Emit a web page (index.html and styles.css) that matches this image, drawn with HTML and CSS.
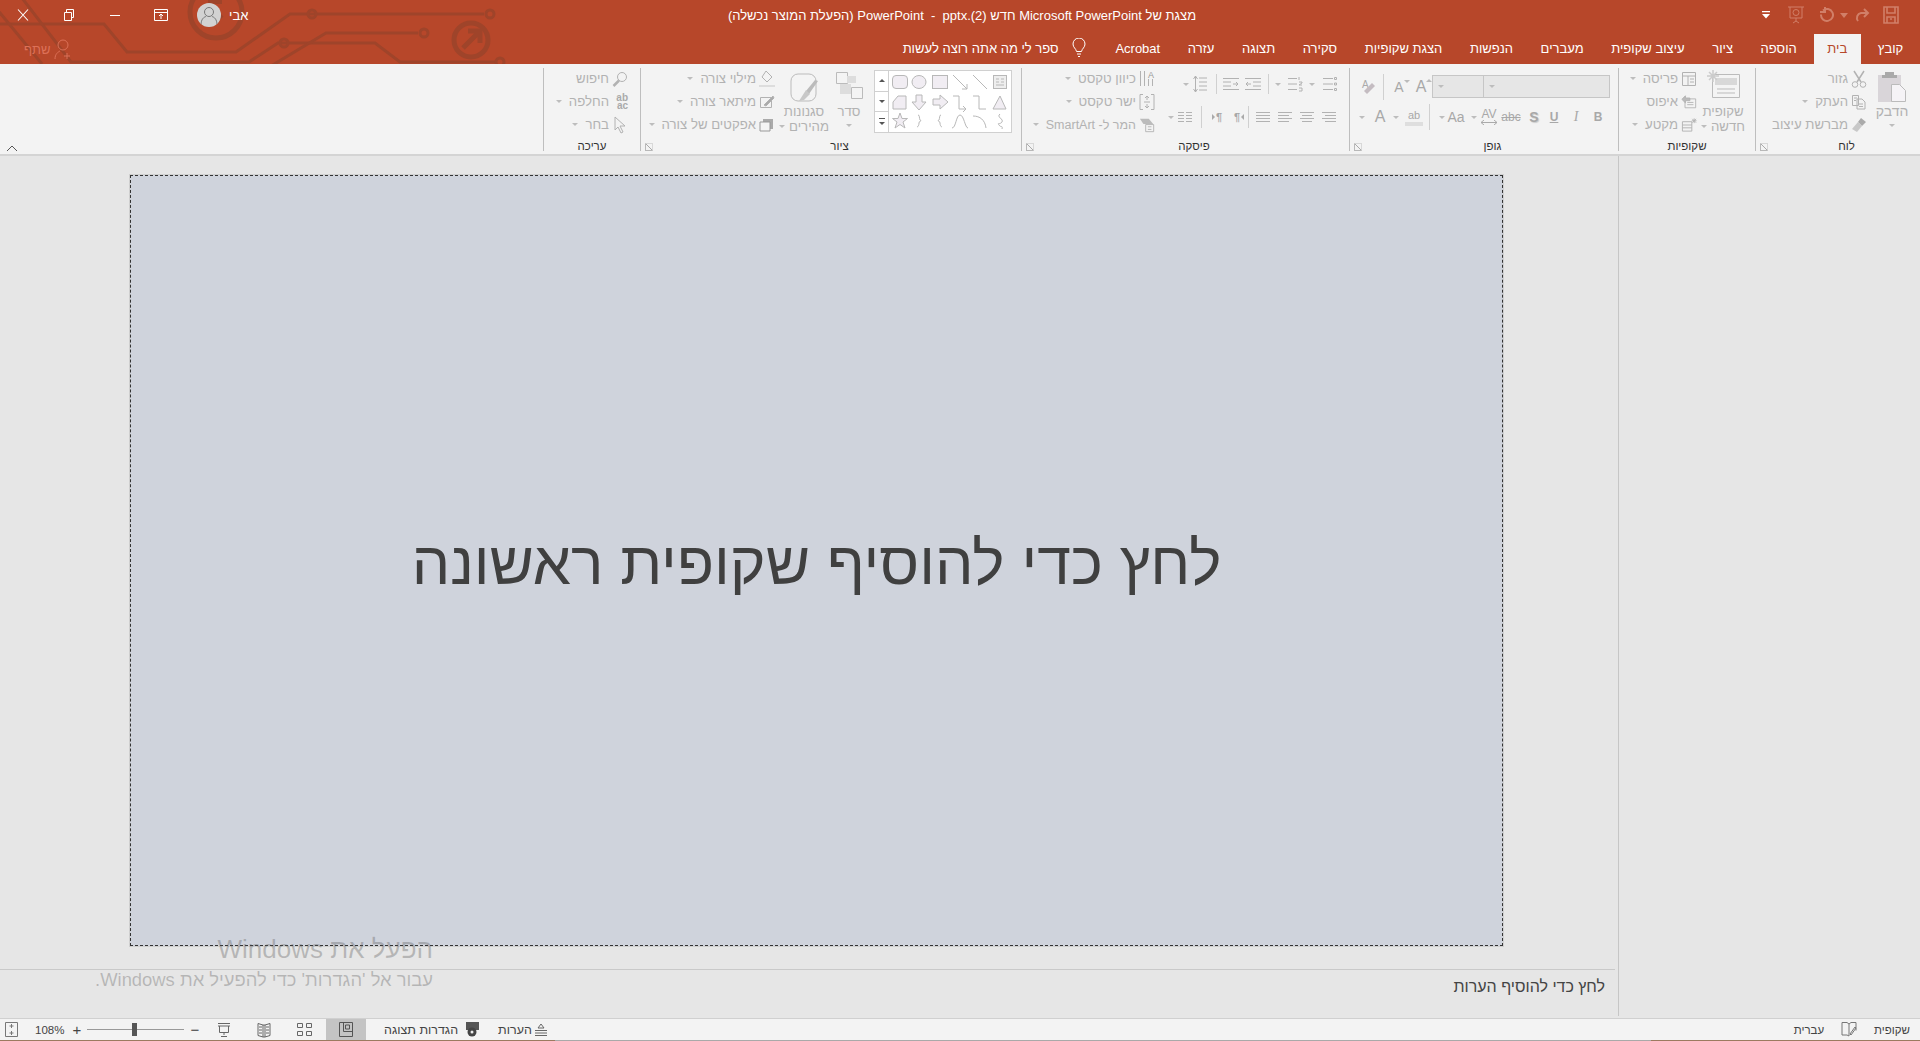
FILE: index.html
```html
<!DOCTYPE html>
<html lang="he">
<head>
  <meta charset="UTF-8">
  <title>PowerPoint</title>
  <link rel="stylesheet" href="styles.css">
</head>
<body>
  <header class="header">
    <svg class="circuit" width="520" height="64" viewBox="0 0 520 64" fill="none" stroke="#9f442a" stroke-width="3">
      <path d="M0 24H104L127 52H236L290 14H484"/>
      <path d="M22 -2L71 62H249L278 43H375L400 62H495"/>
      <path d="M-4 8L42 64"/>
      <path d="M271 66L326 33H418"/>
      <circle cx="312" cy="14" r="4"/><circle cx="490" cy="14" r="4"/>
      <circle cx="284" cy="43" r="4"/><circle cx="500" cy="62" r="4"/><circle cx="424" cy="33" r="4"/>
      <circle cx="471" cy="40" r="17" stroke-width="5"/>
      <path d="M463 48L479 32M468 31H480V43" stroke-width="5"/>
      <circle cx="216" cy="12" r="26" stroke-width="5"/>
      <path d="M208 4L222 18M208 2H222" stroke-width="4"/>
    </svg>

    <div class="titlebar">
      <div class="win-controls">
        <svg class="win-btn" width="16" height="16" viewBox="0 0 16 16" stroke="#fff" fill="none" stroke-width="1.1"><path d="M3 2.500L13 13.500M13 2.500L3 13.500"/></svg>
        <svg class="win-btn" width="16" height="16" viewBox="0 0 16 16" stroke="#fff" fill="none"><path d="M3.500 5.500h7v8h-7zM5.500 5.500v-3h7v8h-2"/></svg>
        <svg class="win-btn" width="16" height="16" viewBox="0 0 16 16" stroke="#fff" fill="none"><path d="M3 8.500h10"/></svg>
        <svg class="win-btn" width="16" height="16" viewBox="0 0 16 16" stroke="#fff" fill="none"><path d="M1.500 2.500h13v11h-13zM1.500 5.500h13M8 12V7.500M6 9l2-2 2 2"/></svg>
        <div class="avatar">
          <svg width="24" height="24" viewBox="0 0 24 24" fill="none" stroke="#777"><circle cx="12" cy="9" r="4.500"/><path d="M4 22c0-6 3-8 5-8.500M20 22c0-6-3-8-5-8.500"/></svg>
        </div>
        <span class="user-name">אבי</span>
      </div>
      <div class="doc-title">מצגת של Microsoft PowerPoint חדש (2).pptx&rlm; &nbsp;-&nbsp; &rlm;PowerPoint (הפעלת המוצר נכשלה)</div>
      <div class="qat">
        <svg width="14" height="10" viewBox="0 0 14 10" fill="#fff"><path d="M3 1h8v1.300H3zM3 4h8L7 8.500z"/></svg>
        <svg class="qat-present" width="18" height="20" viewBox="0 0 18 20" fill="none" stroke="#d17f68"><path d="M1 2h16M3 2v11h12V2M9 13v3M6 18l3-2 3 2"/><circle cx="9" cy="7.500" r="3"/></svg>
        <svg class="qat-undo" width="16" height="18" viewBox="0 0 16 18" fill="none" stroke="#d17f68" stroke-width="2"><path d="M5 4.500a6 6 0 1 1-2 4M7 1v5H2"/></svg>
        <svg width="8" height="5" viewBox="0 0 8 5" fill="#d17f68"><path d="M0 0h8L4 5z"/></svg>
        <svg class="qat-redo" width="16" height="16" viewBox="0 0 16 16" fill="none" stroke="#d17f68" stroke-width="2"><path d="M14 6H7a5 5 0 0 0-3 8M10 2l4 4-4 4"/></svg>
        <svg class="qat-save" width="16" height="18" viewBox="0 0 16 18" fill="none" stroke="#d17f68" stroke-width="1.600"><path d="M1 1h14v16H1zM4 1v6h8V1M4 17v-6h8v6M7 13h2"/></svg>
      </div>
    </div>

    <div class="tabrow">
      <nav class="tabs">
        <span class="tab">קובץ</span>
        <span class="tab active">בית</span>
        <span class="tab">הוספה</span>
        <span class="tab">ציור</span>
        <span class="tab">עיצוב שקופית</span>
        <span class="tab">מעברים</span>
        <span class="tab">הנפשות</span>
        <span class="tab">הצגת שקופיות</span>
        <span class="tab">סקירה</span>
        <span class="tab">תצוגה</span>
        <span class="tab">עזרה</span>
        <span class="tab">Acrobat</span>
        <span class="tell-me">
          <svg width="14" height="20" viewBox="0 0 14 20" fill="none" stroke="#fff"><path d="M4.500 13.500C4 10.500 1 9.500 1 6a6 6 0 0 1 12 0c0 3.500-3 4.500-3.500 7.500zM5 16h4M6 18.500h2"/></svg>
          ספר לי מה אתה רוצה לעשות
        </span>
      </nav>
      <div class="share">
        <svg width="20" height="22" viewBox="0 0 20 22" fill="none" stroke="#dd7158"><circle cx="9" cy="7" r="5"/><path d="M1 21c0-5 3-7 5-8M13 15v6M10 18h6"/></svg>
        <span>שתף</span>
      </div>
    </div>
  </header>

  <section class="ribbon">
    <div class="group g-clip">
      <div class="group-body">
        <div class="big-tool paste">
          <svg width="28" height="30" viewBox="0 0 28 30"><path d="M0 3h23v27H0z" fill="#d9d5d9"/><path d="M7 0h9v3h3v3H4V3h3z" fill="#aaa"/><path d="M13.500 12.500h8l6 6v11h-14z" fill="#f5f3f6" stroke="#bbb"/></svg>
          <span>הדבק</span>
          <i class="caret"></i>
        </div>
        <div class="tool-col">
          <div class="tool"><svg class="ic" width="16" height="18" viewBox="0 0 16 18"><path d="M3 1l7 11M13 1L6 12" stroke-width="1.500"/><circle cx="4" cy="14.500" r="2.800"/><circle cx="12" cy="14.500" r="2.800"/></svg><span>גזור</span></div>
          <div class="tool"><svg class="ic" width="16" height="16" viewBox="0 0 16 16"><path d="M1.500 1.500h6v10h-6zM6 5h5l3 3v7H6zM3 4h3M3 6.500h2M8 10h4M8 12.500h4"/></svg><span>העתק</span><i class="caret far"></i></div>
          <div class="tool"><svg width="16" height="16" viewBox="0 0 16 16"><path d="M10 1l5 4-4 4-4-4z" fill="#aaa"/><path d="M7 5l4 4-5 6-5-3z" fill="#c8c8c8"/></svg><span>מברשת עיצוב</span></div>
        </div>
      </div>
      <div class="group-label">לוח</div>
      <i class="launcher"></i>
    </div>

    <div class="group g-slides">
      <div class="group-body">
        <div class="big-tool new-slide">
          <svg width="34" height="28" viewBox="0 0 34 28" fill="none"><path d="M6.500 4.500h27v23h-27z" fill="#f4f4f4" stroke="#bbb"/><path d="M9 8h22v7H9z" fill="#d8d8d8"/><path d="M11 19h18M11 23h18" stroke="#bbb"/><path d="M7 0v12M1 6h12M3 2l8 8M11 2l-8 8" stroke="#ccc" stroke-width="1.500"/></svg>
          <span>שקופית</span>
          <span class="with-caret">חדשה <i class="caret"></i></span>
        </div>
        <div class="tool-col">
          <div class="tool"><svg class="ic" width="16" height="16" viewBox="0 0 16 16"><path d="M1.500 1.500h13v13h-13zM1.500 5h13M7 5v9.500M9 8h4M9 11h4"/></svg><span>פריסה</span><i class="caret"></i></div>
          <div class="tool"><svg class="ic" width="16" height="16" viewBox="0 0 18 16"><path d="M4.500 4.500h12v10h-12zM7 11h7M7 8.500h7"/><path d="M1 5l4-4v2.500h5v3H5V9z" fill="#bbb"/></svg><span>איפוס</span></div>
          <div class="tool"><svg class="ic" width="16" height="16" viewBox="0 0 17 16"><path d="M1.500 4.500h10v10h-10zM1.500 8h10M1.500 11h10"/><path d="M14 1v5M11.500 3.500h5M12 1.500l4 4M16 1.500l-4 4"/></svg><span>מקטע</span><i class="caret"></i></div>
        </div>
      </div>
      <div class="group-label">שקופיות</div>
    </div>

    <div class="group g-font">
      <div class="group-body stacked">
        <div class="icon-row font-row1">
          <div class="combo combo-name"><i class="caret"></i></div>
          <div class="combo combo-size"><i class="caret"></i></div>
          <span class="glyph g-large">A<i></i></span>
          <span class="glyph g-small">A<i></i></span>
          <i class="vsep"></i>
          <svg class="eraser" width="16" height="18" viewBox="0 0 16 18"><text x="1" y="10" font-size="10" fill="#aaa" font-family="Liberation Sans">A</text><path d="M6 16l8-8-3-3-8 8z" fill="#c4bcc1"/></svg>
        </div>
        <div class="icon-row font-row2">
          <span class="glyph bold">B</span>
          <span class="glyph ital">I</span>
          <span class="glyph under">U</span>
          <span class="glyph shadow">S</span>
          <span class="glyph strike">abc</span>
          <span class="glyph av">AV<svg width="16" height="5" viewBox="0 0 16 5" fill="none" stroke="#aaa"><path d="M0 2.500h16M3 0L0 2.500 3 5M13 0l3 2.500L13 5"/></svg></span>
          <i class="caret c-av"></i>
          <span class="glyph aa">Aa</span>
          <i class="caret c-aa"></i>
          <i class="vsep"></i>
          <span class="glyph hilite">ab</span>
          <i class="caret c-hl"></i>
          <span class="glyph big-a">A</span>
          <i class="caret c-a"></i>
        </div>
      </div>
      <div class="group-label">גופן</div>
      <i class="launcher"></i>
    </div>

    <div class="group g-para">
      <div class="group-body">
        <div class="para-icons">
          <div class="icon-row para-row1">
            <svg class="ic" width="16" height="16" viewBox="0 0 16 16"><path d="M2 2.500h10M2 8h10M2 13.500h10M13.500 1.500h2v2h-2zM13.500 7h2v2h-2zM13.500 12.500h2v2h-2z"/></svg>
            <i class="caret"></i>
            <svg class="ic" width="16" height="16" viewBox="0 0 16 16"><path d="M1 2.500h9M1 8h9M1 13.500h9M12 1v3M12 6h3v1l-3 2h3M12 12h3v3h-3"/></svg>
            <i class="caret"></i>
            <i class="vsep"></i>
            <svg class="ic" width="16" height="14" viewBox="0 0 16 14"><path d="M0 1.500h16M0 12.500h16M8 5h8M8 9h8M6 7H1M3 5L1 7l2 2"/></svg>
            <svg class="ic" width="16" height="14" viewBox="0 0 16 14"><path d="M0 1.500h16M0 12.500h16M0 5h8M0 9h8M10 7h5M13 5l2 2-2 2"/></svg>
            <i class="vsep"></i>
            <svg class="ic spacing" width="14" height="18" viewBox="0 0 14 18"><path d="M6 3h8M6 7h8M6 11h8M6 15h8M2.500 1v16M.5 4l2-3 2 3M.5 14l2 3 2-3"/></svg>
            <i class="caret"></i>
          </div>
          <div class="icon-row para-row2">
            <svg class="ic" width="16" height="12" viewBox="0 0 16 12"><path d="M1 1.500h14M4 4.500h11M1 7.500h14M4 10.500h11"/></svg>
            <svg class="ic" width="16" height="12" viewBox="0 0 16 12"><path d="M1 1.500h14M3 4.500h10M1 7.500h14M3 10.500h10"/></svg>
            <svg class="ic" width="16" height="12" viewBox="0 0 16 12"><path d="M1 1.500h14M1 4.500h11M1 7.500h14M1 10.500h11"/></svg>
            <svg class="ic" width="16" height="12" viewBox="0 0 16 12"><path d="M1 1.500h14M1 4.500h14M1 7.500h14M1 10.500h14"/></svg>
            <i class="vsep"></i>
            <span class="glyph pil"><i class="tri-l"></i>¶</span>
            <span class="glyph pil">¶<i class="tri-r"></i></span>
            <i class="vsep"></i>
            <svg class="ic cols" width="16" height="12" viewBox="0 0 16 12"><path d="M1 1.500h6M1 4.500h6M1 7.500h6M1 10.500h6M9 1.500h6M9 4.500h6M9 7.500h6M9 10.500h6"/></svg>
            <i class="caret"></i>
          </div>
        </div>
        <div class="tool-col">
          <div class="tool"><svg class="ic" width="16" height="18" viewBox="0 0 16 18"><path d="M1.500 1v15M5.500 1v15M9.500 9v7M13.500 9v7"/><text x="9" y="8" font-size="9" fill="#999" stroke="none" font-family="Liberation Sans">A</text></svg><span>כיוון טקסט</span><i class="caret"></i></div>
          <div class="tool"><svg class="ic" width="16" height="18" viewBox="0 0 16 18"><path d="M4 1.500H1v15h3M12 1.500h3v15h-3M8 3v4M6 5l2-2 2 2M8 15v-4M6 13l2 2 2-2M5 9h6"/></svg><span>ישר טקסט</span><i class="caret"></i></div>
          <div class="tool narrow"><svg class="ic" width="16" height="16" viewBox="0 0 18 16"><path d="M1 1h10l5 6H5z" fill="#bbb" stroke="none"/><path d="M7.500 7.500h9v8h-9zM10 10h4M10 13h4"/></svg><span>המר ל- SmartArt</span><i class="caret"></i></div>
        </div>
      </div>
      <div class="group-label">פיסקה</div>
      <i class="launcher"></i>
    </div>

    <div class="group g-draw">
      <div class="group-body">
        <div class="gallery">
          <svg class="shapes" width="122" height="61" viewBox="0 0 122 61" fill="#f1edf3" stroke="#b8b8b8">
            <rect x="3.500" y="4.500" width="15" height="13" rx="3.500"/>
            <ellipse cx="30" cy="11" rx="7" ry="6.500"/>
            <rect x="43.500" y="4.500" width="15" height="13"/>
            <path d="M64 4l14 14M73 18h5v-5" fill="none"/>
            <path d="M84 4l14 14" fill="none"/>
            <rect x="104.500" y="4.500" width="13" height="13" fill="#eee"/><path d="M107 8h3M107 11h3M107 14h8M112 8h3M112 11h3" fill="none"/>
            <path d="M4 31l5-6h8v13H4z"/>
            <path d="M27 24h6v7h4l-7 8-7-8h4z"/>
            <path d="M44 28h7v-4l8 7-8 7v-4h-7z"/>
            <path d="M64 25h6v13h7M74 35l3 3-3 3" fill="none"/>
            <path d="M84 25h6v13h7" fill="none"/>
            <path d="M111 25l6 13h-13z"/>
            <path d="M11 42l2 5.500h5.500l-4.500 3.500 2 6-5-3.500-5 3.500 2-6-4.500-3.500H9z"/>
            <path d="M29 44c2 0 1 3 2 5 1 .500 1 1 1 1s-2 0-2 2c0 2-1 4-2 4" fill="none"/>
            <path d="M52 44c-2 0-1 3-2 5-1 .500-1 1-1 1s2 0 2 2c0 2 1 4 2 4" fill="none"/>
            <path d="M63 57c4 0 4-13 8-13s5 13 8 13" fill="none"/>
            <path d="M84 45c7 0 12 4 13 12" fill="none"/>
            <path d="M111 43c-4 3 4 5 2 8s-5 0-3 3 4 0 3 4" fill="none"/>
          </svg>
          <div class="gallery-scroll">
            <span><i class="tri-up"></i></span>
            <span><i class="tri-down"></i></span>
            <span class="more"><i class="tri-down"></i></span>
          </div>
        </div>
        <div class="big-tool arrange">
          <svg width="27" height="27" viewBox="0 0 27 27"><path d="M.5.500h11v11H.5z" fill="#f4f4f4" stroke="#bbb"/><path d="M11 4h9v7H11zM4 12h11v10H4z" fill="#ddd"/><path d="M15.500 15.500h11v11h-11z" fill="#f4f4f4" stroke="#bbb"/></svg>
          <span>סדר</span>
          <i class="caret"></i>
        </div>
        <div class="big-tool quick-styles">
          <svg width="28" height="29" viewBox="0 0 28 29" fill="none"><rect x="1" y="1" width="25" height="27" rx="7" fill="#f4f4f4" stroke="#bbb"/><path d="M28 8l-3-1-9 11 3 3z" fill="#bbb"/><path d="M16 17l4 4-6 6-5 1z" fill="#c8c8c8"/></svg>
          <span>סגנונות</span>
          <span class="with-caret">מהירים <i class="caret"></i></span>
        </div>
        <div class="tool-col">
          <div class="tool"><svg class="ic" width="16" height="18" viewBox="0 0 16 18"><path d="M7 1l6 6-5 5-5-5z"/><path d="M0 15h16v2H0z" fill="#ddd" stroke="none"/></svg><span>מילוי צורה</span><i class="caret"></i></div>
          <div class="tool"><svg class="ic" width="16" height="16" viewBox="0 0 16 16"><path d="M1.500 3.500h11v10h-11z"/><path d="M5 11l9-9 1 2-8 8z" fill="#aaa"/></svg><span>מיתאר צורה</span><i class="caret"></i></div>
          <div class="tool"><svg width="16" height="16" viewBox="0 0 16 16"><path d="M4 2h10v10H4z" fill="#aaa"/><path d="M1 5h10v9H1z" fill="#f4f4f4" stroke="#999"/></svg><span>אפקטים של צורה</span><i class="caret"></i></div>
        </div>
      </div>
      <div class="group-label">ציור</div>
      <i class="launcher"></i>
    </div>

    <div class="group g-edit">
      <div class="group-body">
        <div class="tool-col">
          <div class="tool"><svg class="ic" width="16" height="16" viewBox="0 0 16 16"><circle cx="10" cy="6" r="4.500"/><path d="M7 9.500L1.500 15" stroke-width="2.500"/></svg><span>חיפוש</span></div>
          <div class="tool"><span class="abac">ab<br>ac</span><span>החלפה</span><i class="caret"></i></div>
          <div class="tool"><svg class="ic" width="16" height="18" viewBox="0 0 14 18"><path d="M2 1v13l3-3 3 6 2-1-3-6h5z"/></svg><span>בחר</span><i class="caret"></i></div>
        </div>
      </div>
      <div class="group-label">עריכה</div>
    </div>

    <div class="collapse">
      <svg width="12" height="7" viewBox="0 0 12 7" fill="none" stroke="#555"><path d="M1 6l5-5 5 5"/></svg>
    </div>
  </section>

  <main class="workspace">
    <div class="editor">
      <div class="slide-area">
        <div class="slide">לחץ כדי להוסיף שקופית ראשונה</div>
      </div>
      <div class="notes">לחץ כדי להוסיף הערות</div>
    </div>
    <aside class="task-pane"></aside>
  </main>

  <div class="activation">
    <div class="act-title">הפעל את Windows</div>
    <div class="act-sub">עבור אל 'הגדרות' כדי להפעיל את Windows.</div>
  </div>

  <footer class="status">
    <div class="status-left">
      <svg class="st-fit" width="13" height="15" viewBox="0 0 13 15" fill="none" stroke="#777"><path d="M.500.500h12v14H.500zM6.500 2v4M4.500 4h4M6.500 9v4M4.500 11h4"/></svg>
      <span class="zoom-val">108%</span>
      <span class="zoom-sign">+</span>
      <div class="slider"><i></i></div>
      <span class="zoom-sign minus">−</span>
      <svg class="st-view" width="14" height="16" viewBox="0 0 14 16" fill="none" stroke="#666"><path d="M1 1.500h12M1 4h12M2.500 4v6.500h9V4M7 10.500V13M4 14.500h6"/></svg>
      <svg class="st-view" width="14" height="16" viewBox="0 0 14 16" fill="none" stroke="#666"><path d="M1 1.500l5 1.500v12l-5-1.500zM13 1.500L8 3v12l5-1.500zM6 3h2M6 15h2M2 5h3M2 8h3M2 11h3M9 5h3M9 8h3M9 11h3"/></svg>
      <svg class="st-view" width="15" height="15" viewBox="0 0 15 15" fill="none" stroke="#666"><path d="M.500 1.500h5v4h-5zM9.500 1.500h5v4h-5zM.500 9.500h5v4h-5zM9.500 9.500h5v4h-5z"/></svg>
      <div class="st-active">
        <svg width="14" height="15" viewBox="0 0 14 15" fill="none" stroke="#555"><path d="M.500.500h13v14H.500zM4.500.500v9M4.500 9.500h9M6.500 3h4v4h-4z"/></svg>
      </div>
      <span class="st-item display-set">הגדרות תצוגה
        <svg width="14" height="16" viewBox="0 0 14 16"><path d="M1 0h13v8H1z" fill="#555"/><circle cx="7" cy="10" r="4.500" fill="#444"/><circle cx="7" cy="10" r="1.500" fill="#eee"/></svg>
      </span>
      <span class="st-item">הערות
        <svg width="12" height="15" viewBox="0 0 12 15" fill="none" stroke="#666"><path d="M0 8.500h12M0 11h12M0 13.500h12M3 6l3-4 3 4z"/></svg>
      </span>
    </div>
    <div class="status-right">
      <span class="st-item">עברית</span>
      <svg class="st-spell" width="16" height="15" viewBox="0 0 16 15" fill="none" stroke="#777"><path d="M1 .500h5l2 1.500v12l-2-1H1zM8 2l2-1.500h5v8M9 12l5-7 1 1-5 7z"/></svg>
      <span class="st-item">שקופית</span>
    </div>
  </footer>
</body>
</html>
```

FILE: styles.css
```css
* { box-sizing: border-box; }

html, body { margin: 0; height: 100%; overflow: hidden; }

body {
  display: flex;
  flex-direction: column;
  position: relative;
  height: 1041px;
  background: #e6e6e6;
  color: #444;
  font-family: "Liberation Sans", "DejaVu Sans", sans-serif;
  font-size: 12px;
}

svg text { direction: ltr; }

/* title bar + tabs */
.header {
  position: relative;
  height: 64px;
  flex: none;
  background: #b7472a;
  color: #fff;
}
.circuit { position: absolute; left: 0; top: 0; }

.titlebar {
  position: relative;
  display: grid;
  grid-template-columns: 1fr auto 1fr;
  align-items: center;
  height: 34px;
  padding-bottom: 4px;
}
.win-controls { display: flex; align-items: center; padding-left: 15px; }
.win-btn { margin-right: 30px; flex: none; }
.win-controls .win-btn:nth-child(4) { margin-right: 28px; }
.avatar {
  width: 24px; height: 24px; border-radius: 50%;
  background: #d2d2d2;
  overflow: hidden;
}
.user-name { margin-left: 8px; font-size: 13px; }

.doc-title { direction: rtl; margin-left: 4px; font-size: 13px; white-space: nowrap; }

.qat {
  display: flex;
  align-items: center;
  justify-content: flex-end;
  padding-right: 21px;
}
.qat-present { margin-left: 14px; }
.qat-undo { margin-left: 13px; }
.qat svg:nth-child(4) { margin-left: 6px; }
.qat-redo { margin-left: 6px; }
.qat-save { margin-left: 13px; }

.tabrow {
  position: relative;
  display: flex;
  flex-direction: row-reverse;
  justify-content: space-between;
  height: 30px;
}
.tabs { display: flex; direction: rtl; align-items: stretch; padding-right: 3px; }
.tab {
  display: flex;
  align-items: center;
  padding: 0 13.800px 2px;
  font-size: 13px;
  white-space: nowrap;
}
.tab.active { background: #f3f3f3; color: #b7472a; margin: 0 3px; }
.tell-me { display: flex; align-items: center; gap: 13px; margin-right: 16px; font-size: 13px; padding-bottom: 2px; }
.share {
  display: flex; align-items: center; gap: 3px;
  direction: ltr;
  flex-direction: row-reverse;
  padding-left: 24px;
  color: #dd7158;
  font-size: 13px;
}

/* ribbon */
.ribbon {
  display: flex;
  direction: rtl;
  position: relative;
  flex: none;
  height: 92px;
  padding-top: 4px;
  background: #f3f3f3;
  border-bottom: 2px solid #d4d4d4;
  color: #b2b2b2;
  font-size: 12px;
}
.group {
  position: relative;
  display: flex;
  flex-direction: column;
  height: 83px;
  border-left: 1px solid #bebebe;
  flex: none;
}
.g-clip { width: 165px; }
.g-slides { width: 137px; }
.g-font { width: 269px; }
.g-para { width: 328px; }
.g-draw { width: 381px; }
.g-edit { width: 97px; }

.group-body { display: flex; flex: 1; min-height: 0; }
.group-body.stacked { flex-direction: column; }
.group-label {
  height: 16px;
  margin-bottom: -4px;
  line-height: 15px;
  text-align: center;
  color: #333;
  font-size: 11.500px;
}
.g-clip .group-label, .g-font .group-label, .g-para .group-label, .g-draw .group-label { padding-left: 17px; }
.launcher {
  position: absolute; left: 4px; bottom: 0;
  width: 8px; height: 8px;
  border-left: 1px solid #b8b8b8;
  border-bottom: 1px solid #b8b8b8;
  border-top: 1px solid #d8d8d8;
  border-right: 1px solid #d8d8d8;
  background: linear-gradient(45deg, #f3f3f3 44%, #aaa 44% 56%, #f3f3f3 56%);
}

.caret {
  display: inline-block;
  width: 0; height: 0;
  border: 3px solid transparent;
  border-top: 3px solid #bdbdbd;
  border-bottom: 0;
  flex: none;
}
.caret.far { margin-right: 14px; }

.tool-col { display: flex; flex-direction: column; margin-top: -1px; }
.tool {
  display: flex;
  align-items: center;
  gap: 3px;
  height: 23px;
  white-space: nowrap;
  font-size: 13.200px;
}
.tool.narrow { font-size: 12.500px; }
.tool .caret { margin-right: 4px; }
.tool > svg { flex: none; }
.ic { fill: none; stroke: #b2b2b2; stroke-width: 1; }

.big-tool {
  display: flex;
  flex-direction: column;
  align-items: center;
  font-size: 13.200px;
  line-height: 15px;
  white-space: nowrap;
}
.with-caret { display: flex; align-items: center; gap: 4px; }

.paste { width: 46px; margin: 0 5px 0 2px; padding-top: 4px; }
.paste span { margin-top: 2px; font-size: 14px; }
.paste .caret { margin-top: 5px; }

.new-slide { width: 46px; margin: 0 9px 0 3px; padding-top: 2px; }
.new-slide span:first-of-type { margin-top: 6px; }

/* font group: flat rows, each item spaced by hand like the real ribbon */
.g-font .group-body { padding: 7px 8px 0 0; }
.icon-row { display: flex; align-items: center; }
.font-row1 { height: 23px; }
.font-row2 { height: 24px; margin-top: 7px; }
.combo {
  display: flex; align-items: center;
  justify-content: flex-end;
  height: 23px;
  padding-left: 5px;
  background: #e6e6e6;
  border: 1px solid #c6c6c6;
}
.combo-name { width: 127px; }
.combo-size { width: 51px; border-right: 0; }

.glyph {
  position: relative;
  display: inline-flex;
  align-items: center;
  justify-content: center;
  flex: none;
  color: #a8a8a8;
  font-weight: bold;
  font-size: 12px;
}
.g-large { width: 16px; margin-right: 3px; font-size: 16px; font-weight: normal; }
.g-small { width: 16px; margin-right: 6px; font-size: 14px; font-weight: normal; }
.g-large i, .g-small i { position: absolute; top: 1px; right: -3px; border: 3px solid transparent; }
.g-large i { border-bottom-color: #bbb; border-top: 0; }
.g-small i { border-top-color: #bbb; border-bottom: 0; }
.vsep { display: block; width: 1px; height: 26px; background: #d0d0d0; flex: none; }
.font-row1 .vsep { margin: 0 7px 0 0; }
.eraser { margin-right: 6px; flex: none; }

.bold { width: 22px; margin-right: 1px; }
.ital { width: 22px; font-style: italic; font-family: "Liberation Serif", serif; font-size: 14px; font-weight: normal; }
.under { width: 22px; text-decoration: underline; }
.shadow { width: 18px; font-size: 14px; text-shadow: 1px 1px 1px #ccc; }
.strike { width: 28px; font-size: 12px; font-weight: normal; text-decoration: line-through; }
.av { flex-direction: column; width: 16px; font-size: 12px; font-weight: normal; line-height: 11px; }
.c-av { margin-right: 4px; }
.aa { width: 22px; margin-right: 4px; font-size: 14px; font-weight: normal; }
.font-row2 .vsep { margin: 0 9px 0 0; }
.hilite { width: 18px; height: 18px; margin-right: 6px; font-size: 11px; font-weight: normal; border-bottom: 4px solid #dedede; }
.c-hl { margin-right: 6px; }
.big-a { width: 16px; margin-right: 5px; font-size: 16px; font-weight: normal; }
.c-a { margin-right: 7px; }

.para-icons { width: 194px; padding: 7px 12px 0 0; flex: none; }
.para-row1 { height: 18px; }
.para-row1 > * { margin-right: 6px; flex: none; }
.para-row1 > :first-child { margin-right: 0; }
.para-row1 .vsep { height: 20px; margin-left: 1px; }
.para-row1 .spacing { margin-right: 8px; }
.para-row1 .caret:last-child { margin-right: 4px; }
.para-row2 { height: 22px; margin-top: 13px; }
.para-row2 > * { margin-right: 6px; flex: none; }
.para-row2 > :first-child { margin-right: 0; }
.para-row2 .vsep { height: 22px; margin-left: 3px; }
.para-row2 .glyph { width: 12px; font-size: 11px; gap: 1px; margin-right: 0; }
.para-row2 .glyph + .glyph { margin-right: 10px; }
.para-row2 .glyph + .vsep { margin-right: 9px; margin-left: 0; }
.para-row2 .cols { margin-right: 8px; }
.para-row2 .caret { margin-right: 3px; }
.tri-l, .tri-r { display: block; width: 0; height: 0; border: 3px solid transparent; }
.tri-l { border-right-color: #aaa; border-left: 0; }
.tri-r { border-left-color: #aaa; border-right: 0; }

.gallery {
  display: flex;
  direction: ltr;
  flex-direction: row-reverse;
  align-self: flex-start;
  flex: none;
  margin: 2px 9px 0 6px;
  width: 138px;
  height: 63px;
  background: #fff;
  border: 1px solid #d0d0d0;
}
.shapes { display: block; flex: none; }
.gallery-scroll {
  display: flex;
  flex-direction: column;
  width: 14px;
  border-right: 1px solid #d0d0d0;
}
.gallery-scroll span {
  flex: 1;
  display: flex; align-items: center; justify-content: center;
  border-bottom: 1px solid #d0d0d0;
  position: relative;
}
.gallery-scroll span:last-child { border-bottom: 0; }
.tri-up, .tri-down { display: block; width: 0; height: 0; border: 3px solid transparent; }
.tri-up { border-bottom-color: #555; border-top: 0; }
.tri-down { border-top-color: #555; border-bottom: 0; }
.more::before { content: ""; position: absolute; top: 6px; left: 4px; width: 6px; height: 1px; background: #555; }
.more .tri-down { margin-top: 3px; }

.arrange { width: 38px; padding-top: 4px; }
.arrange span { margin-top: 5px; }
.arrange .caret { margin-top: 5px; }
.quick-styles { width: 52px; margin-left: 3px; padding-top: 5px; }
.quick-styles span:first-of-type { margin-top: 2px; }

.g-edit .group-body { padding-right: 12px; }
.abac {
  display: block;
  width: 16px;
  line-height: 8px;
  font-size: 10px;
  color: #aaa;
  font-weight: bold;
}

.collapse { position: absolute; left: 6px; bottom: 2px; line-height: 0; }

/* slide + notes */
.workspace { flex: 1; display: flex; min-height: 0; }
.editor { width: 1618px; display: flex; flex-direction: column; }
.slide-area { flex: 1; padding: 19px 0 0 130px; min-height: 0; }
.slide {
  display: flex;
  align-items: center;
  justify-content: center;
  width: 1373px;
  height: 771px;
  padding-top: 4px;
  direction: rtl;
  color: #404040;
  font-size: 60.800px;
  background: #cfd3dc;
  border: 1px dashed #333;
  outline: 1px solid #cfcfcf;
}
.notes {
  height: 49px;
  margin-right: 3px;
  padding: 8px 10px 0 0;
  direction: rtl;
  font-size: 16px;
  color: #444;
  border-top: 1px solid #c9c9c9;
}
.task-pane { flex: 1; margin-bottom: 2px; border-left: 1px solid #c6c6c6; }

.activation {
  position: absolute;
  left: 0;
  top: 934px;
  width: 433px;
  direction: rtl;
  color: rgba(90, 90, 90, 0.34);
  pointer-events: none;
}
.act-title { font-size: 26px; line-height: 30px; }
.act-sub { font-size: 18.400px; line-height: 32px; white-space: nowrap; }

/* status bar */
.status {
  display: flex;
  justify-content: space-between;
  flex: none;
  height: 23px;
  padding-bottom: 1px;
  background: linear-gradient(to right, #9c7a60 555px, #a9a9a9 555px 1651px, #9c7a60 1651px) bottom / 100% 1px no-repeat, #f3f3f3;
  border-top: 1px solid #d0d0d0;
  color: #444;
  font-size: 12.500px;
}
.status-left, .status-right { display: flex; align-items: center; }
.status-left { padding-left: 5px; }
.status-right { padding-right: 10px; font-size: 11.500px; }
.st-fit { margin-right: 17px; }
.zoom-val { width: 36px; font-size: 11.500px; }
.zoom-sign { width: 12px; font-size: 15px; text-align: center; }
.zoom-sign.minus { margin-right: 16px; }
.slider {
  position: relative;
  width: 97px;
  height: 1px;
  margin: 0 5px 0 4px;
  background: #999;
}
.slider i {
  position: absolute;
  left: 45px; top: -6px;
  width: 5px; height: 13px;
  background: #555;
}
.st-view { margin-right: 26px; flex: none; }
.st-active {
  display: flex; align-items: center; justify-content: center;
  width: 40px; height: 100%;
  margin: 0 18px 0 -12px;
  background: #c4c4c4;
}
.st-item { display: inline-flex; align-items: center; gap: 3px; white-space: nowrap; }
.display-set { gap: 7px; margin-right: 19px; }
.st-spell { margin: 0 17px; }
```
